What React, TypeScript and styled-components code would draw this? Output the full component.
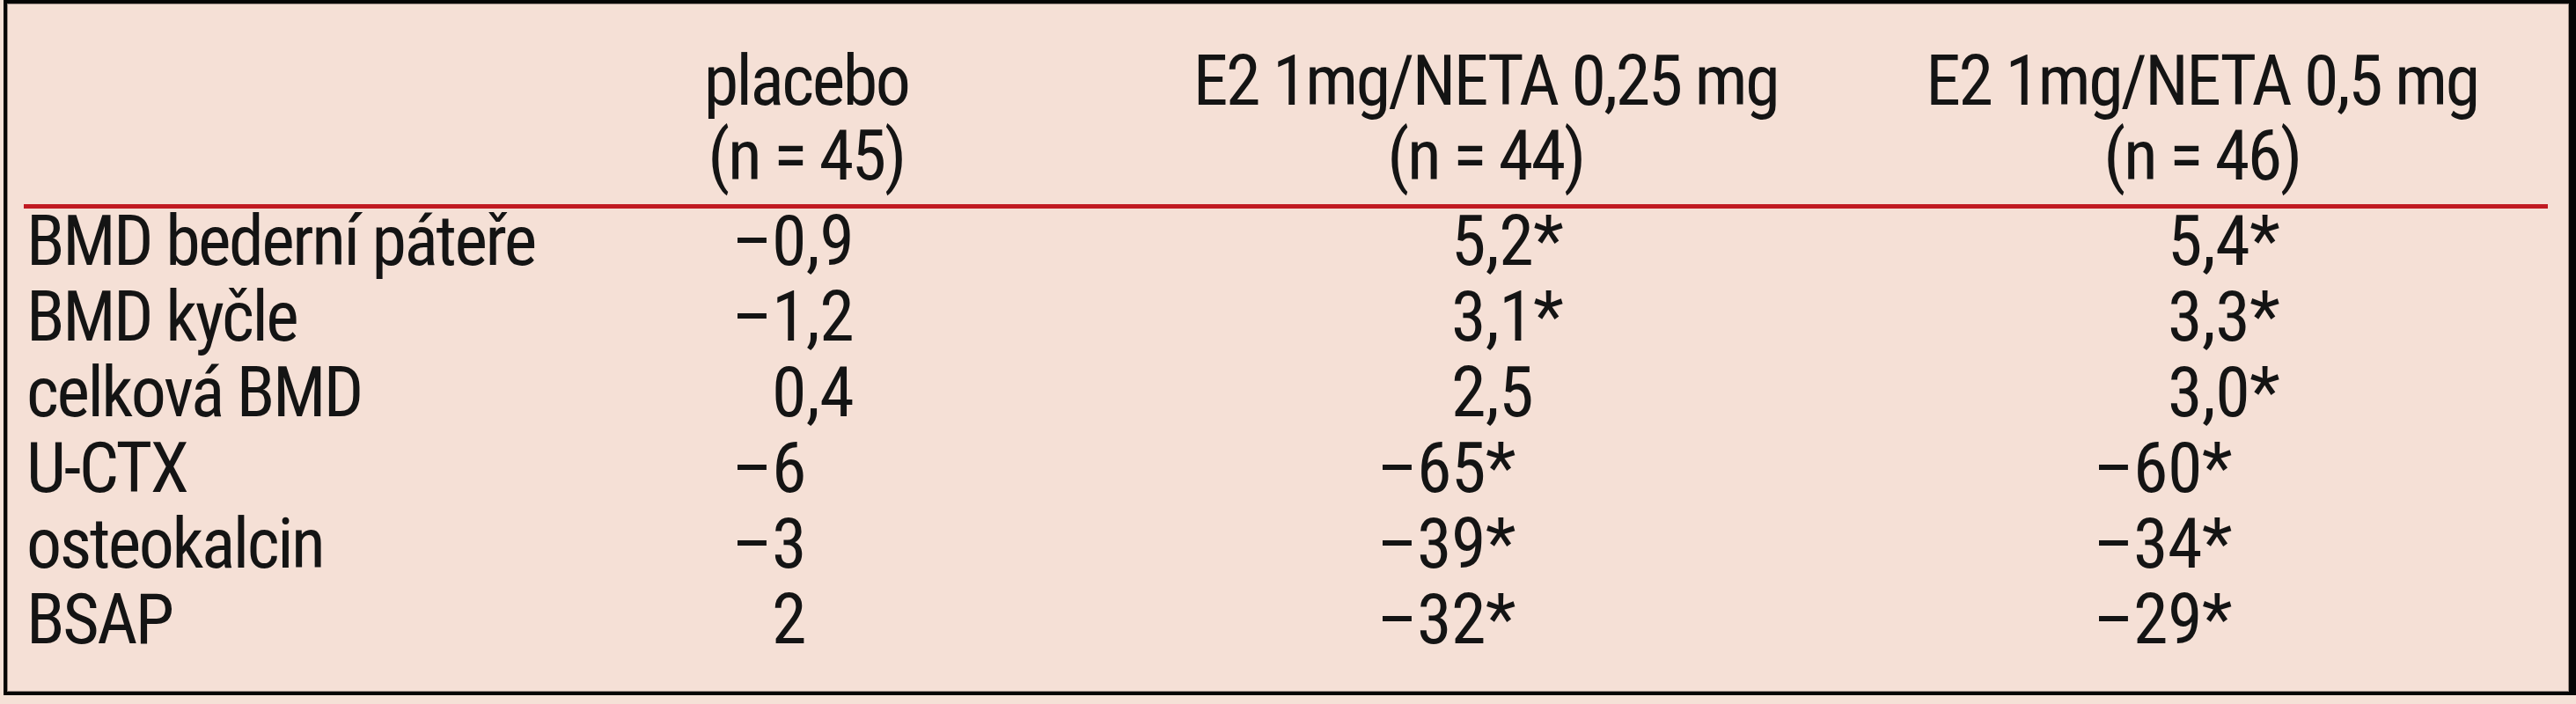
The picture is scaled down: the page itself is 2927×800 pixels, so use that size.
import React from "react";
import styled, { createGlobalStyle } from "styled-components";

const GlobalStyle = createGlobalStyle`
  html, body {
    margin: 0;
    padding: 0;
    background: #f5e1d7;
  }
  body {
    font-family: "Roboto Condensed", "Liberation Sans Narrow", Roboto, "DejaVu Sans Condensed", sans-serif;
  }
`;

const COLUMNS = "689px 400px 1144px 484px";

const Frame = styled.div`
  box-sizing: border-box;
  margin-left: 4px;
  width: calc(100% - 4px);
  height: 790px;
  background: #f5e0d6;
  border: 4px solid #050505;
  border-right-width: 8px;
  box-shadow: inset 1px 1px 0 #9c8c86, inset -1px -1px 0 #9c8c86;
  padding: 46px 24px 0 19px;
  color: #141414;
  font-size: 80px;
  letter-spacing: -2.5px;
`;

const HeaderRow = styled.div`
  display: grid;
  grid-template-columns: ${COLUMNS};
  border-bottom: 5px solid #c11a22;
  padding-bottom: 12px;
`;

const HeaderCell = styled.div`
  display: flex;
  flex-direction: column;
  align-items: center;
  line-height: 85px;
  white-space: nowrap;
`;

const BodyRow = styled.div`
  display: grid;
  grid-template-columns: ${COLUMNS};
  line-height: 74px;
  padding-bottom: 12px;
  white-space: nowrap;
`;

const Label = styled.div`
  padding-left: 3px;
`;

const Value = styled.div`
  display: grid;
  grid-template-columns: 1fr 1fr;
  letter-spacing: -0.5px;
`;

const IntPart = styled.span`
  text-align: right;
`;

const FracPart = styled.span`
  text-align: left;
`;

type Row = [string, string, string, string];

const rows: Row[] = [
  ["BMD bederní páteře", "–0,9", "5,2*", "5,4*"],
  ["BMD kyčle", "–1,2", "3,1*", "3,3*"],
  ["celková BMD", "0,4", "2,5", "3,0*"],
  ["U-CTX", "–6", "–65*", "–60*"],
  ["osteokalcin", "–3", "–39*", "–34*"],
  ["BSAP", "2", "–32*", "–29*"],
];

const headers: [string, string][] = [
  ["placebo", "(n = 45)"],
  ["E2 1mg/NETA 0,25 mg", "(n = 44)"],
  ["E2 1mg/NETA 0,5 mg", "(n = 46)"],
];

function DecimalValue({ text }: { text: string }) {
  const m = text.match(/^([–-]?\d+)(.*)$/);
  const int = m ? m[1] : text;
  const frac = m ? m[2] : "";
  return (
    <Value>
      <IntPart>{int}</IntPart>
      <FracPart>{frac}</FracPart>
    </Value>
  );
}

export default function App() {
  return (
    <>
      <GlobalStyle />
      <Frame>
        <HeaderRow>
          <div />
          {headers.map(([a, b]) => (
            <HeaderCell key={a}>
              <span>{a}</span>
              <span>{b}</span>
            </HeaderCell>
          ))}
        </HeaderRow>
        {rows.map(([label, a, b, c]) => (
          <BodyRow key={label}>
            <Label>{label}</Label>
            <DecimalValue text={a} />
            <DecimalValue text={b} />
            <DecimalValue text={c} />
          </BodyRow>
        ))}
      </Frame>
    </>
  );
}
